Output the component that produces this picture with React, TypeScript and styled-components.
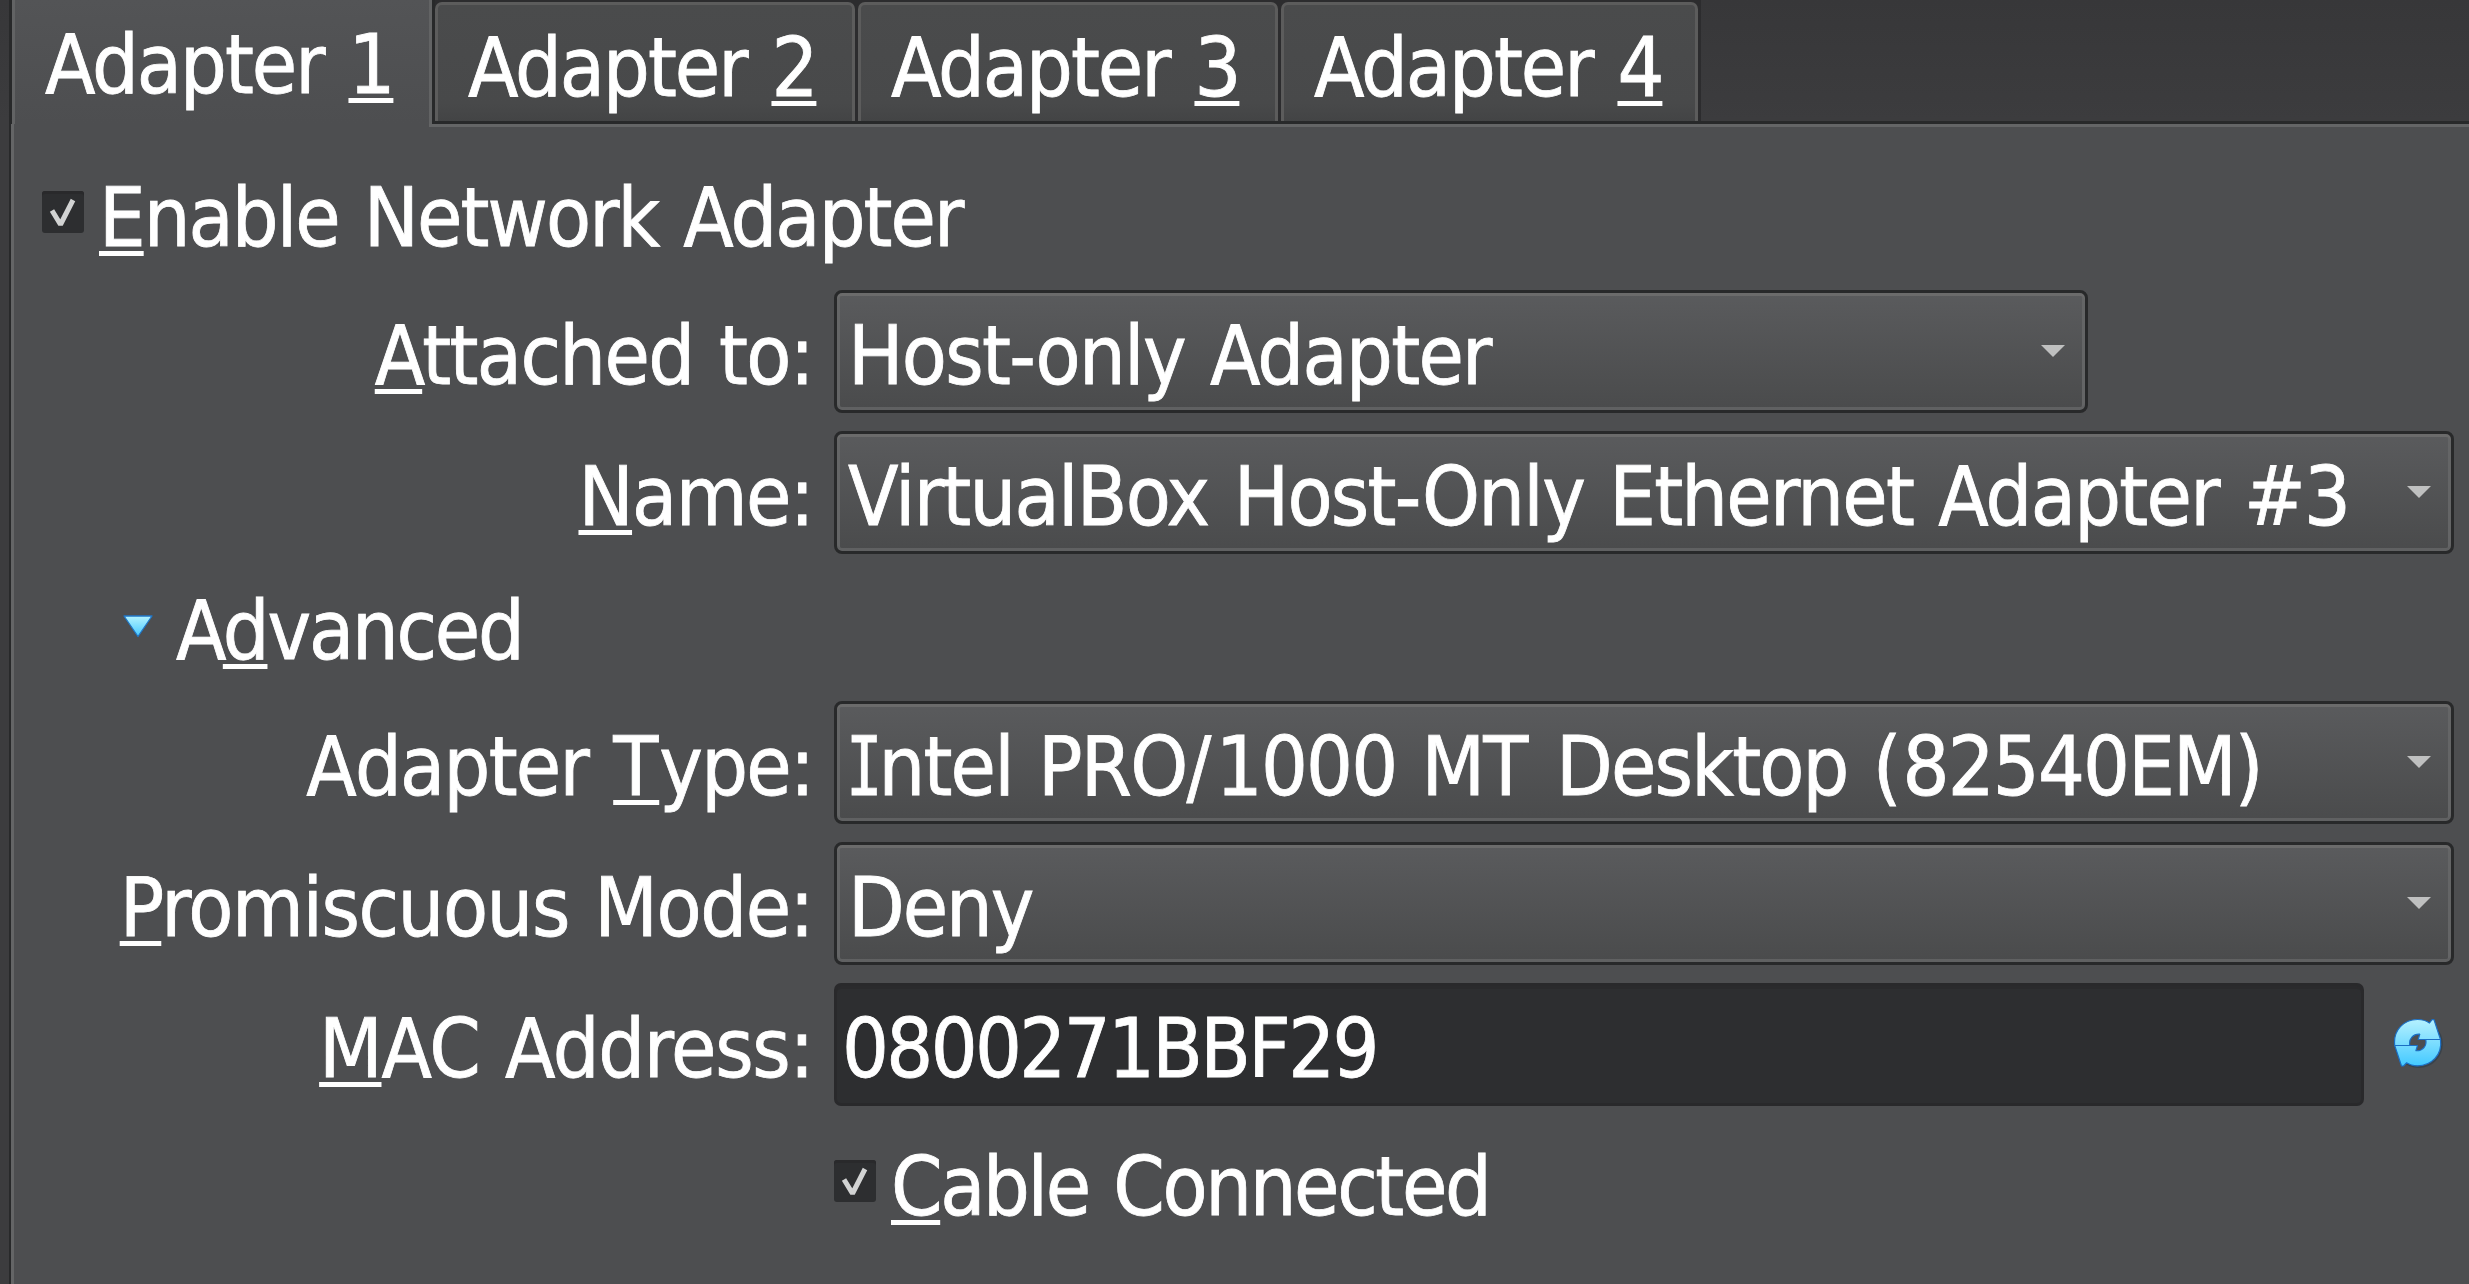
import React from "react";
import styled, { createGlobalStyle } from "styled-components";

const Global = createGlobalStyle`
  * { box-sizing: border-box; }
  body { margin: 0; background: #3c3c3e; overflow: hidden; }
`;

const Window = styled.main`
  width: 2469px;
  height: 1284px;
  padding-left: 9px;
  display: flex;
  flex-direction: column;
  overflow: hidden;
  background: linear-gradient(#373739 0, #3c3c3e 120px);
  color: #fff;
  font-family: "DejaVu Sans Condensed", "DejaVu Sans", Tahoma, sans-serif;
  font-stretch: condensed;
  font-size: 82px;
  white-space: pre;
  -webkit-text-stroke: 0.8px #fff;
`;

const Text = styled.span<{ $ls?: number; $kern?: boolean }>`
  display: block;
  letter-spacing: ${(p) => p.$ls ?? -1.8}px;
  word-spacing: 3.5px;
  line-height: 96px;
  font-kerning: ${(p) => (p.$kern === false ? "none" : "auto")};
`;

const Key = styled.span<{ $ls?: number }>`
  letter-spacing: ${(p) => (p.$ls === undefined ? "inherit" : `${p.$ls}px`)};
  text-decoration: underline;
  text-decoration-thickness: 5px;
  text-underline-offset: 5px;
  text-decoration-skip-ink: none;
`;

const Spaced = styled.span<{ $ls: number }>`
  letter-spacing: ${(p) => p.$ls}px;
`;

const TabBar = styled.nav`
  display: flex;
  height: 121px;
  flex: none;
`;

const ActiveTab = styled.div`
  width: 426px;
  height: 124px;
  position: relative;
  padding: 17px 0 0 33px;
  border-left: 3px solid #28292a;
  border-right: 3px solid #28292a;
  background: linear-gradient(#535456, #4d4e50);
  box-shadow: inset 3px 0 #626364, inset -3px 0 #626364;

  &::after {
    content: "";
    position: absolute;
    left: 2px;
    right: 3px;
    bottom: -3px;
    height: 3px;
    background: #4d4e50;
  }
`;

const Tab = styled.div<{ $w: number }>`
  width: ${(p) => p.$w}px;
  height: 121px;
  border-top: 2px solid #2c2c2e;
  border-right: 3px solid #2c2c2e;
  background: #2c2c2e;
`;

const TabFace = styled.div`
  height: 119px;
  padding: 15px 0 0 30px;
  border: 3px solid #5c5c5c;
  border-bottom: 0;
  border-radius: 7px 7px 0 0;
  background: linear-gradient(#4a4b4c, #48494a 85%, #434445);
`;

const Panel = styled.section`
  flex: 1;
  border-left: 2px solid #28292a;
  border-top: 3px solid #28292a;
  background: #4d4e50;
`;

const PanelBody = styled.div`
  height: 100%;
  border-left: 3px solid #646566;
  border-top: 3px solid #646566;
  padding-left: 28px;
`;

const CheckRow = styled.label<{ $top: number; $left?: number }>`
  display: flex;
  align-items: flex-start;
  height: 96px;
  margin-top: ${(p) => p.$top}px;
  margin-left: ${(p) => p.$left ?? 0}px;
`;

const Box = styled.span`
  width: 42px;
  height: 42px;
  margin: 21px 15px 0 0;
  border-radius: 3px;
  background: #2d2e30;
  box-shadow: inset 0 3px #29292b;

  svg { display: block; }
`;

const Row = styled.div<{ $gap: number }>`
  display: flex;
  height: 123px;
  margin-top: ${(p) => p.$gap}px;
`;

const Label = styled.div`
  width: 792px;
  padding: 18px 21px 0 0;
  display: flex;
  justify-content: flex-end;
`;

const Select = styled.div<{ $w?: number }>`
  width: ${(p) => p.$w ?? 1620}px;
  height: 123px;
  padding: 15px 20px 0 11px;
  display: flex;
  justify-content: space-between;
  border: 3px solid #28292a;
  border-radius: 8px;
  background: linear-gradient(#5a5b5d, #4a4b4c);
  box-shadow: inset 0 3px #6b6b6b, inset 0 -3px #606162, inset 3px 0 #646566, inset -3px 0 #646566;
`;

const Input = styled.div`
  width: 1530px;
  height: 123px;
  padding: 15px 0 0 5px;
  border: 3px solid #29292b;
  border-radius: 7px;
  background: #2d2e30;
  box-shadow: inset 0 3px #2a2a2c;
`;

const Advanced = styled.div`
  display: flex;
  height: 96px;
  margin: 29px 0 0 81px;
`;

const Arrow = styled.svg`
  width: 24px;
  height: 12px;
  margin-top: 37px;
  flex: none;
`;

const Expander = styled.svg`
  width: 30px;
  height: 23px;
  margin: 32px 23px 0 0;
  flex: none;
`;

const Refresh = styled.svg`
  width: 50px;
  height: 50px;
  margin: 35px 0 0 29px;
`;

const Serif = styled.span`
  display: inline-block;
  width: 33px;
  margin-left: -2.5px;
  font-family: "DejaVu Sans Mono", monospace;
  letter-spacing: 0;
  transform: scaleX(0.74);
  transform-origin: left;
`;

const Check = () => (
  <Box>
    <svg width="42" height="42" viewBox="0 0 42 42">
      <path d="M10 19.5l8.500 14L31 9" fill="none" stroke="#d2d3d3" strokeWidth="5" strokeLinejoin="bevel" />
    </svg>
  </Box>
);

const Down = () => (
  <Arrow viewBox="0 0 24 12">
    <path d="M0 0h24L12 12z" fill="#bfc0c0" />
  </Arrow>
);

type MnemonicProps = { children: string; ls?: number; keyLs?: number; kern?: boolean };

function Mnemonic({ children, ls, keyLs, kern }: MnemonicProps) {
  const [before, key, after] = children.split("_");
  return (
    <Text $ls={ls} $kern={kern}>
      {before}
      <Key $ls={keyLs}>{key}</Key>
      {after}
    </Text>
  );
}

export default function App() {
  return (
    <Window>
      <Global />
      <TabBar>
        <ActiveTab><Mnemonic ls={-2}>Adapter _1_</Mnemonic></ActiveTab>
        <Tab $w={423}><TabFace><Mnemonic ls={-2}>Adapter _2_</Mnemonic></TabFace></Tab>
        <Tab $w={423}><TabFace><Mnemonic ls={-2}>Adapter _3_</Mnemonic></TabFace></Tab>
        <Tab $w={420}><TabFace><Mnemonic ls={-2}>Adapter _4_</Mnemonic></TabFace></Tab>
      </TabBar>
      <Panel>
        <PanelBody>
          <CheckRow $top={43}><Check /><Mnemonic ls={-1.92}>_E_nable Network Adapter</Mnemonic></CheckRow>
          <Row $gap={24}>
            <Label><Mnemonic ls={-1.6}>_A_ttached to:</Mnemonic></Label>
            <Select $w={1254}><Text $ls={-1.7}>Host-only Adapter</Text><Down /></Select>
          </Row>
          <Row $gap={18}>
            <Label><Mnemonic ls={-1.6}>_N_ame:</Mnemonic></Label>
            <Select><Text $ls={-1.72}>VirtualBox Host-Only Ethernet Adapter #3</Text><Down /></Select>
          </Row>
          <Advanced>
            <Expander viewBox="0 0 30 23">
              <defs>
                <linearGradient id="tri" x1="0" y1="0" x2="0" y2="1">
                  <stop offset="0" stopColor="#b4f3ff" />
                  <stop offset="1" stopColor="#45c8ff" />
                </linearGradient>
              </defs>
              <path d="M1 1h28L15 21.500z" fill="url(#tri)" stroke="#2077c8" strokeWidth="1.300" strokeLinejoin="round" />
            </Expander>
            <Mnemonic ls={-2.2}>A_d_vanced</Mnemonic>
          </Advanced>
          <Row $gap={22}>
            <Label><Mnemonic kern={false} keyLs={1} ls={-1.75}>Adapter _T_ype:</Mnemonic></Label>
            <Select>
              <Text>
                <Serif>I</Serif>ntel PRO<Spaced $ls={4.5}>/</Spaced>1000 M<Spaced $ls={2.5}>T</Spaced> Desktop{" "}
                <Spaced $ls={1}>(</Spaced>82540EM)
              </Text>
              <Down />
            </Select>
          </Row>
          <Row $gap={18}>
            <Label><Mnemonic ls={-1.45}>_P_romiscuous Mode:</Mnemonic></Label>
            <Select><Text $ls={-2.1}>Deny</Text><Down /></Select>
          </Row>
          <Row $gap={18}>
            <Label><Mnemonic ls={-1.3}>_M_AC Address:</Mnemonic></Label>
            <Input><Text $ls={-2.6}>0800271BBF29</Text></Input>
            <Refresh viewBox="0 0 50 50">
              <defs>
                <linearGradient id="ref" gradientUnits="userSpaceOnUse" x1="0" y1="2" x2="0" y2="48">
                  <stop offset="0" stopColor="#b4f1ff" />
                  <stop offset="1" stopColor="#43c9ff" />
                </linearGradient>
              </defs>
              <circle cx="25.800" cy="26" r="23.200" fill="none" stroke="#2c3b48" strokeOpacity=".6" strokeWidth="1.500" />
              <path d="M1.700 27.500C0 12 11 1.500 24.500 1.500c5 0 9 1.300 12 3.500L39 1.700h2L47.500 21.500H25.200l1.600-5.300c-6.500-.4-11.300 4.500-10 11.300z" fill="url(#ref)" stroke="#1b6fc4" strokeWidth="1.200" strokeLinejoin="round" />
              <path d="M47.500 21.500C49.500 37 38.500 47.800 24.500 47.800c-4.500 0-8-1-11-3L10.500 48h-2L1.700 27.500h22.800l-1.600 5.200c6.500.6 11.300-4.500 9.800-11.200z" fill="url(#ref)" stroke="#1b6fc4" strokeWidth="1.200" strokeLinejoin="round" />
            </Refresh>
          </Row>
          <CheckRow $top={33} $left={792}><Check /><Mnemonic ls={-2.35}>_C_able Connected</Mnemonic></CheckRow>
        </PanelBody>
      </Panel>
    </Window>
  );
}
